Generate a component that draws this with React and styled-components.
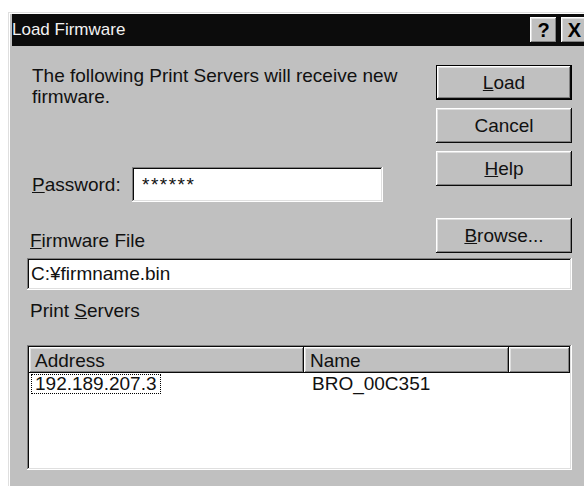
import React from "react";
import styled, { createGlobalStyle, css } from "styled-components";

const GlobalStyle = createGlobalStyle`
  html, body {
    margin: 0;
    padding: 0;
    background: #ffffff;
    overflow: hidden;
  }
  body {
    font-family: "Liberation Sans", Arial, sans-serif;
    font-size: 19px;
    color: #111;
  }
`;

const raised = css`
  background: #c0c0c0;
  box-shadow: inset -1px -1px #0a0a0a, inset 1px 1px #ffffff,
    inset -2px -2px #808080, inset 2px 2px #dfdfdf;
`;

const sunken = css`
  background: #ffffff;
  box-shadow: inset -1px -1px #ffffff, inset 1px 1px #808080,
    inset -2px -2px #dfdfdf, inset 2px 2px #0a0a0a;
`;

// the dialog frame runs off the right and bottom edges of the page
const Window = styled.div`
  margin: 12px 0 0 8px;
  width: 582px;
  height: 484px;
  padding: 2px 2px 0 4px;
  box-sizing: border-box;
  background: #c0c0c0;
  box-shadow: inset -1px -1px #0a0a0a, inset 1px 1px #dfdfdf,
    inset -2px -2px #808080, inset 2px 2px #ffffff;
  display: flex;
  flex-direction: column;
  overflow: hidden;
`;

const TitleBar = styled.div`
  flex: none;
  height: 32px;
  background: #0c0c0c;
  display: flex;
  align-items: center;
  gap: 4px;
`;

const Title = styled.div`
  flex: 1;
  color: #f2f2f2;
  font-size: 17px;
`;

const TitleButton = styled.div`
  ${raised};
  width: 27px;
  height: 26px;
  display: flex;
  align-items: center;
  justify-content: center;
  font-weight: bold;
  font-size: 20px;
  line-height: 1;
  color: #000;
`;

const Body = styled.div`
  padding: 19px 0 0 15px;
  width: 545px;
  display: flex;
  flex-direction: column;
`;

const TopSection = styled.div`
  display: grid;
  grid-template-columns: 1fr 136px;
`;

const LeftColumn = styled.div`
  display: flex;
  flex-direction: column;
`;

const Intro = styled.p`
  margin: 0 0 0 5px;
  line-height: 21px;
  width: 390px;
`;

const PasswordRow = styled.div`
  display: flex;
  align-items: center;
  margin-top: 60px;
`;

const Label = styled.label`
  display: block;
  line-height: 21px;
  padding-left: ${(p) => p.$indent || 0}px;
  width: ${(p) => (p.$width ? `${p.$width}px` : "auto")};
  margin-top: ${(p) => p.$top || 0}px;
  margin-bottom: ${(p) => p.$bottom || 0}px;
`;

const Field = styled.div`
  ${sunken};
  height: ${(p) => p.$height}px;
  width: ${(p) => (p.$width ? `${p.$width}px` : "auto")};
  margin-top: ${(p) => p.$top || 0}px;
  box-sizing: border-box;
  display: flex;
  align-items: center;
  padding-left: ${(p) => p.$pad || 5}px;
  letter-spacing: ${(p) => p.$spacing || 0}px;
`;

const ButtonColumn = styled.div`
  display: flex;
  flex-direction: column;
  gap: 8px;
`;

const Button = styled.div`
  ${raised};
  height: 35px;
  box-sizing: border-box;
  display: flex;
  align-items: center;
  justify-content: center;
  ${(p) =>
    p.$default &&
    css`
      border: 1px solid #000;
    `}
`;

const FileRow = styled.div`
  display: flex;
  justify-content: space-between;
  align-items: flex-end;
  margin-top: 16px;
`;

const BrowseButton = styled(Button)`
  width: 136px;
`;

const ListView = styled.div`
  ${sunken};
  margin-top: 24px;
  height: 125px;
  padding: 2px;
  box-sizing: border-box;
  display: flex;
  flex-direction: column;
`;

const HeaderRow = styled.div`
  display: grid;
  grid-template-columns: 275px 205px 1fr;
  height: 26px;
`;

const HeaderCell = styled.div`
  ${raised};
  display: flex;
  align-items: flex-end;
  padding: 0 0 3px 6px;
  line-height: 1;
`;

const DataRow = styled.div`
  display: grid;
  grid-template-columns: 275px 205px 1fr;
  height: 20px;
  align-items: center;
`;

const Cell = styled.div`
  padding-left: ${(p) => (p.$focus ? 2 : 8)}px;
`;

const Focus = styled.span`
  display: inline-block;
  border: 1px dotted #000;
  padding: 0 3px;
  line-height: 18px;
`;

export default function App() {
  return (
    <>
      <GlobalStyle />
      <Window>
        <TitleBar>
          <Title>Load Firmware</Title>
          <TitleButton>?</TitleButton>
          <TitleButton>X</TitleButton>
        </TitleBar>
        <Body>
          <TopSection>
            <LeftColumn>
              <Intro>The following Print Servers will receive new firmware.</Intro>
              <PasswordRow>
                <Label $indent={5} $width={100}>
                  <u>P</u>assword:
                </Label>
                <Field $height={35} $width={251} $pad={10} $spacing={1.5}>
                  ******
                </Field>
              </PasswordRow>
            </LeftColumn>
            <ButtonColumn>
              <Button $default>
                <span>
                  <u>L</u>oad
                </span>
              </Button>
              <Button>Cancel</Button>
              <Button>
                <span>
                  <u>H</u>elp
                </span>
              </Button>
            </ButtonColumn>
          </TopSection>

          <FileRow>
            <Label $indent={3} $bottom={2}>
              <u>F</u>irmware File
            </Label>
            <BrowseButton>
              <span>
                <u>B</u>rowse...
              </span>
            </BrowseButton>
          </FileRow>
          <Field $height={32} $pad={4} $top={5}>
            C:¥firmname.bin
          </Field>

          <Label $indent={3} $top={10}>
            Print <u>S</u>ervers
          </Label>

          <ListView>
            <HeaderRow>
              <HeaderCell>Address</HeaderCell>
              <HeaderCell>Name</HeaderCell>
              <HeaderCell />
            </HeaderRow>
            <DataRow>
              <Cell $focus>
                <Focus>192.189.207.3</Focus>
              </Cell>
              <Cell>BRO_00C351</Cell>
              <Cell />
            </DataRow>
          </ListView>
        </Body>
      </Window>
    </>
  );
}
